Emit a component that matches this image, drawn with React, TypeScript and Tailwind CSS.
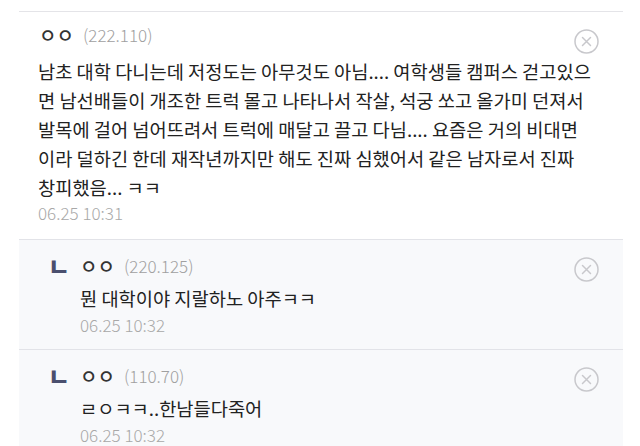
const FONT = "font-['Noto_Sans_CJK_KR','Noto_Sans',sans-serif]";

const CloseIcon = () => (
  <svg width="25" height="25" viewBox="0 0 25 25" fill="none">
    <circle cx="12.5" cy="12.5" r="11.5" stroke="#c8c8cc" strokeWidth="1.5" />
    <path d="M8.5 8.5L16.5 16.5M16.5 8.5L8.5 16.5" stroke="#c8c8cc" strokeWidth="1.5" strokeLinecap="round" />
  </svg>
);

const comment = {
  name: 'ㅇㅇ',
  ip: '(222.110)',
  lines: [
    '남초 대학 다니는데 저정도는 아무것도 아님.... 여학생들 캠퍼스 걷고있으',
    '면 남선배들이 개조한 트럭 몰고 나타나서 작살, 석궁 쏘고 올가미 던져서',
    '발목에 걸어 넘어뜨려서 트럭에 매달고 끌고 다님.... 요즘은 거의 비대면',
    '이라 덜하긴 한데 재작년까지만 해도 진짜 심했어서 같은 남자로서 진짜',
    '창피했음... ㅋㅋ',
  ],
  date: '06.25 10:31',
};

const replies = [
  { name: 'ㅇㅇ', ip: '(220.125)', text: '뭔 대학이야 지랄하노 아주ㅋㅋ', date: '06.25 10:32' },
  { name: 'ㅇㅇ', ip: '(110.70)', text: 'ㄹㅇㅋㅋ..한남들다죽어', date: '06.25 10:32' },
];

export default function App() {
  return (
    <div className={`w-[640px] h-[446px] bg-white overflow-hidden ${FONT}`}>
      <div className="pt-[11px] pl-[19px] pr-[17px]">
        {/* main comment */}
        <div className="border-t border-[#e4e4e8] flex pb-[14px]">
          <div className="flex-1 min-w-0 pl-[20px] pt-[11px]">
            <div className="flex items-center gap-[9px] h-[24px]">
              <span className="text-[19px] text-[#333] font-medium">{comment.name}</span>
              <span className="text-[17px] text-[#a0a0a0] font-light">{comment.ip}</span>
            </div>
            <div className="mt-[9px] -ml-[1px] text-[18.7px] leading-[29px] text-[#222] whitespace-nowrap">
              {comment.lines.map((l, i) => (
                <div key={i}>{l}</div>
              ))}
            </div>
            <div className="-ml-[1px] text-[17px] leading-[24px] text-[#a8a8a8] font-light">{comment.date}</div>
          </div>
          <div className="pt-[17px] pr-[24px]">
            <CloseIcon />
          </div>
        </div>

        {/* replies */}
        {replies.map((r, i) => (
          <div key={i} className="border-t border-[#e2e3e8] bg-[#f8f9fb] flex pb-[12px]">
            <div className="flex-1 min-w-0 pl-[29px] pt-[14px]">
              <div className="flex items-center h-[24px]">
                <span className="w-[32px] text-[24px] leading-[24px] text-[#4a4f6e] font-black">ㄴ</span>
                <span className="text-[19px] text-[#333] font-medium">{r.name}</span>
                <span className="ml-[9px] text-[17px] text-[#a0a0a0] font-light">{r.ip}</span>
              </div>
              <div className="pl-[32px] mt-[6px] text-[18.7px] leading-[28px] text-[#222]">{r.text}</div>
              <div className="pl-[32px] mt-[1px] text-[17px] leading-[24px] text-[#a8a8a8] font-light">{r.date}</div>
            </div>
            <div className="pt-[17px] pr-[24px]">
              <CloseIcon />
            </div>
          </div>
        ))}
      </div>
    </div>
  );
}
